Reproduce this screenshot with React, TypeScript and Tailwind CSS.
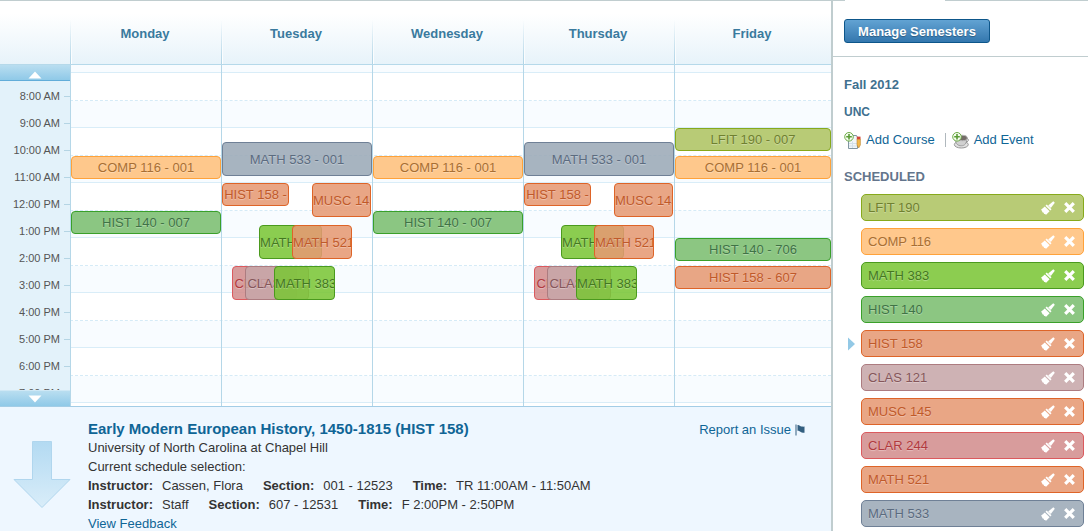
import React from 'react';

type Tone = 'olive' | 'amber' | 'lime' | 'green' | 'coral' | 'mauve' | 'rose' | 'slate';

interface Block {
  label: string;
  tone: Tone;
  top: number;
  height: number;
  left?: number;
  width?: number;
}

interface Day {
  name: string;
  blocks: Block[];
}

const TONES: Record<Tone, string> = {
  olive: 'border-[#87a91c] bg-[#aec362]/87 text-[#6f8030]',
  amber: 'border-[#ffa23a] bg-[#ffc07b]/87 text-[#a86f33]',
  lime: 'border-[#4b9a1e] bg-[#7bc536]/87 text-[#44781f]',
  green: 'border-[#3aa02a] bg-[#7bbe6f]/87 text-[#3f7346]',
  coral: 'border-[#de6428] bg-[#e69973]/87 text-[#c0592a]',
  mauve: 'border-[#ac7c80] bg-[#c7a7a9]/87 text-[#85565a]',
  rose: 'border-[#db5a5e] bg-[#d28d8d]/87 text-[#b13a3e]',
  slate: 'border-[#6f8096] bg-[#9ba9b7]/87 text-[#5b6b7f]',
};

// left and width are percentages of the day column
const TUE_THU: Block[] = [
  { label: 'MATH 533 - 001', tone: 'slate', top: 77, height: 34 },
  { label: 'HIST 158 -', tone: 'coral', top: 118, height: 23, width: 44.7 },
  { label: 'MUSC 145', tone: 'coral', top: 118, height: 34, left: 60, width: 39.4 },
  { label: 'MATH 383', tone: 'lime', top: 160, height: 34, left: 24.7, width: 42 },
  { label: 'MATH 521', tone: 'coral', top: 160, height: 34, left: 46.7, width: 40 },
  { label: 'CLAR 244', tone: 'rose', top: 201, height: 34, left: 6.7, width: 43.3 },
  { label: 'CLAS 121', tone: 'mauve', top: 201, height: 34, left: 15.4, width: 42.6 },
  { label: 'MATH 383', tone: 'lime', top: 201, height: 34, left: 34.7, width: 40.7 },
];

const MON_WED: Block[] = [
  { label: 'COMP 116 - 001', tone: 'amber', top: 91, height: 23 },
  { label: 'HIST 140 - 007', tone: 'green', top: 146, height: 23 },
];

const DAYS: Day[] = [
  { name: 'Monday', blocks: MON_WED },
  { name: 'Tuesday', blocks: TUE_THU },
  { name: 'Wednesday', blocks: MON_WED },
  { name: 'Thursday', blocks: TUE_THU },
  {
    name: 'Friday',
    blocks: [
      { label: 'LFIT 190 - 007', tone: 'olive', top: 63, height: 23 },
      { label: 'COMP 116 - 001', tone: 'amber', top: 91, height: 23 },
      { label: 'HIST 140 - 706', tone: 'green', top: 173, height: 23 },
      { label: 'HIST 158 - 607', tone: 'coral', top: 201, height: 23 },
    ],
  },
];

const HOURS = [
  '8:00 AM', '9:00 AM', '10:00 AM', '11:00 AM', '12:00 PM', '1:00 PM',
  '2:00 PM', '3:00 PM', '4:00 PM', '5:00 PM', '6:00 PM', '7:00 PM',
];

const COURSES: { name: string; tone: Tone; current?: boolean }[] = [
  { name: 'LFIT 190', tone: 'olive' },
  { name: 'COMP 116', tone: 'amber' },
  { name: 'MATH 383', tone: 'lime' },
  { name: 'HIST 140', tone: 'green' },
  { name: 'HIST 158', tone: 'coral', current: true },
  { name: 'CLAS 121', tone: 'mauve' },
  { name: 'MUSC 145', tone: 'coral' },
  { name: 'CLAR 244', tone: 'rose' },
  { name: 'MATH 521', tone: 'coral' },
  { name: 'MATH 533', tone: 'slate' },
];

const SECTIONS = [
  { instructor: 'Cassen, Flora', section: '001 - 12523', time: 'TR 11:00AM - 11:50AM' },
  { instructor: 'Staff', section: '607 - 12531', time: 'F 2:00PM - 2:50PM' },
];

const DAY_GRID = 'grid grid-cols-[151fr_151fr_151fr_151fr_157fr]';

const BrushIcon = () => (
  <svg width="14" height="14" viewBox="0 0 14 14" fill="white">
    <path d="M12.3 0.2 L13.8 1.7 L9.8 6.9 L7.2 4.6 Z" />
    <path d="M5.7 3.5 L10.5 8.2 L9.3 9.5 L4.5 4.8 Z" />
    <path d="M3.8 5.4 L8.6 10.2 L5.1 13.8 L3.9 12.9 L3.2 13 L2.4 11.4 L1.3 11.2 L1.1 9.9 L0 8.8 Z" />
  </svg>
);

const CrossIcon = () => (
  <svg width="11" height="11" viewBox="0 0 11 11" stroke="white" strokeWidth="3.2">
    <path d="M1.2 1.2 L9.8 9.8 M9.8 1.2 L1.2 9.8" />
  </svg>
);

const PlusBadge = () => (
  <g>
    <circle cx="5" cy="4.8" r="4.3" fill="#f4fbef" stroke="#6cab45" />
    <path d="M5 2 V7.6 M2.2 4.8 H7.8" stroke="#5a9c35" strokeWidth="1.6" />
  </g>
);

const AddCourseIcon = () => (
  <svg width="17" height="17" viewBox="0 0 17 17" fill="none">
    <path d="M4.5 3.5 H12.5 L13.5 5.5 V16.5 H4.5 Z" fill="#f1f6f9" stroke="#8095a1" />
    <path d="M5 11.5 H13 M5 14 H13 M8.5 9.5 V16" stroke="#d3e1e9" />
    <path d="M13 7 H16.4 V13 L14.7 16 L13 13 Z" fill="#f3b84a" stroke="#b88638" strokeWidth="0.6" />
    <path d="M12.8 4.6 H16.5 V7.2 H12.8 Z" fill="#d2453b" />
    <PlusBadge />
  </svg>
);

const AddEventIcon = () => (
  <svg width="17" height="17" viewBox="0 0 17 17" fill="none">
    <ellipse cx="9.3" cy="12.6" rx="7" ry="3.4" fill="#e2e2e2" stroke="#979797" />
    <path d="M3.5 7 C3.5 12 6 13.8 9.2 13.8 C12.6 13.8 14.8 11.6 14.8 6.5 Z" fill="#d0d0d0" stroke="#909090" strokeWidth="0.8" />
    <ellipse cx="10.5" cy="6" rx="4.8" ry="2.7" fill="#746c68" stroke="#b5b5b5" />
    <path d="M14.6 6.5 C17 6.5 17 10 14 10" stroke="#8c8c8c" />
    <PlusBadge />
  </svg>
);

const DownArrow = () => (
  <svg width="58" height="69" viewBox="0 0 58 69">
    <defs>
      <linearGradient id="arrow" x1="0" y1="0" x2="0" y2="1">
        <stop offset="0" stopColor="#b3daf2" />
        <stop offset="1" stopColor="#d9edf9" />
      </linearGradient>
    </defs>
    <path d="M19.5 1.5 H38.5 V39.5 H57 L29 67.5 L1 39.5 H19.5 Z" fill="url(#arrow)" stroke="#b0d6ee" />
  </svg>
);

const ScrollButton = ({ up }: { up?: boolean }) => (
  <button
    type="button"
    aria-label={up ? 'Earlier hours' : 'Later hours'}
    className={`flex h-4 w-full shrink-0 items-center justify-center bg-linear-to-b from-[#b9def0] to-[#8fc9e8] ${
      up ? 'border-b border-[#62add9] pt-1' : 'border-t border-[#cfe8f5]'
    }`}
  >
    <svg width="14" height="8" viewBox="0 0 14 8" fill="white">
      <path d={up ? 'M7 0.5 L13.5 7.5 H0.5 Z' : 'M7 7.5 L13.5 0.5 H0.5 Z'} />
    </svg>
  </button>
);

const CourseBlock: React.FC<{ block: Block }> = ({ block }) => (
  <div
    className={`absolute flex items-center overflow-hidden rounded border whitespace-nowrap text-shadow-[0_1px_1px_rgb(255_255_255/0.35)] ${TONES[block.tone]}`}
    style={{
      top: block.top,
      height: block.height,
      left: `${block.left ?? 0}%`,
      width: `${block.width ?? 100}%`,
    }}
  >
    <span className="mx-auto pt-px">{block.label}</span>
  </div>
);

const Calendar = () => (
  <section>
    <header className="flex border-t border-b border-t-[#c0cdcf] border-b-[#b5d9ea] bg-linear-to-b from-white from-20% to-[#e7f3fa]">
      <div className="w-[70px]" />
      <div className={`${DAY_GRID} flex-1`}>
        {DAYS.map((day) => (
          <div key={day.name} className="flex h-[63px]">
            <div className="w-px bg-linear-to-b from-transparent from-30% to-[#b0d4e6]" />
            <div className="w-px bg-linear-to-b from-transparent from-30% to-white" />
            <h2 className="flex-1 pt-[23px] pr-[3px] text-center leading-5 font-bold text-[#3a7a9e]">{day.name}</h2>
          </div>
        ))}
      </div>
    </header>

    <div className="flex">
      <div className="relative w-[70px]">
        <div className="absolute inset-0 flex flex-col bg-[#e3f2fa]">
          <ScrollButton up />
          <div className="min-h-0 flex-1 overflow-hidden pt-[2px]">
            {HOURS.map((hour) => (
              <div key={hour} className="flex h-[27px] items-center justify-end gap-1 text-[11px] text-[#555]">
                {hour}
                <span className="h-px w-[6px] bg-[#b5d5e4]" />
              </div>
            ))}
          </div>
          <ScrollButton />
        </div>
      </div>

      <div className="relative flex-1">
        <div className="h-2 border-b border-[#d9edf8] bg-[#f8fcff]" />
        {[0, 1, 2, 3, 4, 5].map((n) => (
          <div key={n}>
            <div className="h-7 border-b border-dashed border-[#d5ebf7] bg-white" />
            <div className="h-[27px] border-b border-[#d9edf8] bg-[#f8fcff]" />
          </div>
        ))}
        <div className="h-[3px]" />

        <div className={`${DAY_GRID} absolute inset-0`}>
          {DAYS.map((day) => (
            <div key={day.name} className="relative border-l border-[#b5d7e8]">
              {day.blocks.map((block, i) => (
                <CourseBlock key={i} block={block} />
              ))}
            </div>
          ))}
        </div>
      </div>
    </div>
  </section>
);

const CourseDetails = () => (
  <section className="flex flex-1 border-t border-[#a3cde6] bg-[#eef7ff] pr-[26px] text-[#333]">
    <div className="w-[88px] pt-[33px] pl-[13px]">
      <DownArrow />
    </div>
    <div className="flex-1 pt-3 leading-[19px]">
      <h1 className="text-[15px] leading-[19px] font-bold text-[#0f6596]">
        Early Modern European History, 1450-1815 (HIST 158)
      </h1>
      <p>University of North Carolina at Chapel Hill</p>
      <p>Current schedule selection:</p>
      {SECTIONS.map((s) => (
        <p key={s.section} className="flex gap-5">
          <span className="flex gap-[9px]"><b>Instructor:</b>{s.instructor}</span>
          <span className="flex gap-[9px]"><b>Section:</b>{s.section}</span>
          <span className="flex gap-[9px]"><b>Time:</b>{s.time}</span>
        </p>
      ))}
      <a href="#feedback" className="text-[#0f6596]">View Feedback</a>
    </div>
    <a href="#report" className="mt-[13px] flex h-[19px] items-center gap-1 self-start text-[#0f6596]">
      Report an Issue
      <svg width="10" height="12" viewBox="0 0 10 12" fill="#335f80">
        <path d="M0.5 0.5 H1.5 V11.5 H0.5 Z M2.5 1 C4.5 0.8 5 3 9.5 2.6 V8.8 C5.5 9 5 6.6 2.5 6.8 Z" />
      </svg>
    </a>
  </section>
);

const Sidebar = () => (
  <aside className="w-[257px] shrink-0 border-l-2 border-[#c0cdcf]">
    <div className="flex h-px">
      <div className="w-3 bg-[#c0cdcf]" />
      <div className="w-[100px]" />
      <div className="flex-1 bg-[#c0cdcf]" />
    </div>
    <div className="border-b border-[#c0cdcf] pt-[18px] pb-[13px] pl-[11px]">
      <button
        type="button"
        className="block h-6 w-[146px] rounded-[3px] border border-[#0d568a] bg-linear-to-b from-[#62a3d3] to-[#3377ae] pt-px font-bold text-white text-shadow-[0_1px_1px_rgb(0_0_0/0.3)]"
      >
        Manage Semesters
      </button>
    </div>

    <div className="flex flex-col gap-[9px] pt-[19px] pl-[11px] leading-[18px]">
      <h2 className="font-bold text-[#40708f]">Fall 2012</h2>
      <h3 className="text-xs leading-[18px] font-bold text-[#40708f]">UNC</h3>
      <div className="flex h-5 items-center text-[#0f6596]">
        <a href="#add-course" className="flex items-center gap-[5px]">
          <AddCourseIcon />
          Add Course
        </a>
        <span className="mr-[6px] ml-[10px] h-[14px] w-px bg-[#b0b8bd]" />
        <a href="#add-event" className="flex items-center gap-[5px]">
          <AddEventIcon />
          Add Event
        </a>
      </div>
      <h3 className="pt-[9px] font-bold text-[#63758c]">SCHEDULED</h3>
    </div>

    <ul className="flex flex-col gap-[7px] pt-2 pr-1 pb-1">
      {COURSES.map((course) => (
        <li key={course.name} className="flex items-center">
          <span className="w-7 shrink-0 pl-[15px]">
            {course.current && (
              <svg width="7" height="14" viewBox="0 0 7 14">
                <path d="M0 0.5 L7 7 L0 13.5 Z" fill="#93c9e6" />
              </svg>
            )}
          </span>
          <div
            className={`flex h-[27px] flex-1 items-center rounded-[5px] border pr-2 pl-[6px] text-shadow-[0_1px_1px_rgb(255_255_255/0.35)] ${TONES[course.tone]}`}
          >
            <span className="flex-1">{course.name}</span>
            <button type="button" aria-label={`Change color of ${course.name}`}>
              <BrushIcon />
            </button>
            <button type="button" aria-label={`Remove ${course.name}`} className="ml-[9px]">
              <CrossIcon />
            </button>
          </div>
        </li>
      ))}
    </ul>
  </aside>
);

export default function App() {
  return (
    <div className="flex h-screen overflow-hidden bg-white font-['Liberation_Sans',Arial,sans-serif] text-[13px]">
      <main className="flex min-w-0 flex-1 flex-col">
        <Calendar />
        <CourseDetails />
      </main>
      <Sidebar />
    </div>
  );
}
